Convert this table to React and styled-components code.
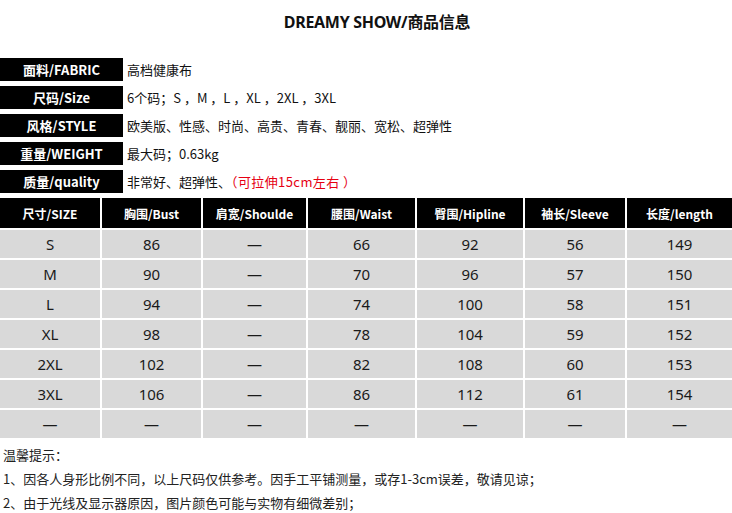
import React from "react";
import styled, { createGlobalStyle } from "styled-components";

const Global = createGlobalStyle`
  html, body { margin: 0; padding: 0; background: #fff; }
  body { font-family: "Noto Sans", "Noto Sans CJK SC", sans-serif; }
`;

const Page = styled.div`
  width: 732px;
  height: 513px;
  overflow: hidden;
  background: #fff;
`;

const Title = styled.h1`
  margin: 0;
  padding: 12px 0 0 22px;
  height: 46px;
  box-sizing: border-box;
  line-height: 20px;
  text-align: center;
  font-size: 16px;
  font-weight: 700;
  color: #111;
  font-family: "Noto Sans", "Noto Sans CJK SC", sans-serif;
  letter-spacing: -0.3px;
`;

const InfoList = styled.div`
  display: flex;
  flex-direction: column;
  gap: 5px;
  margin-top: 12px;
`;

const InfoRow = styled.div`
  display: flex;
  align-items: center;
  height: 23px;
`;

const Label = styled.div`
  width: 123px;
  height: 100%;
  background: #000;
  color: #fff;
  font-weight: 700;
  font-size: 13px;
  display: flex;
  align-items: center;
  justify-content: center;
  font-family: "Noto Sans CJK SC", sans-serif;
`;

const Value = styled.div`
  padding-left: 4px;
  font-size: 13px;
  color: #111;
  font-family: "Noto Sans CJK SC", sans-serif;
`;

const Red = styled.span`
  color: #e60012;
  letter-spacing: 0.4px;
`;

const Table = styled.div`
  margin-top: 5px;
  display: grid;
  grid-template-columns: 100px 99px 103px 107px 106px 100px 105px;
  grid-auto-rows: 28px;
  grid-template-rows: 30px;
  gap: 2px;
  background: #fff;
`;

const Head = styled.div`
  background: #000;
  color: #fff;
  font-weight: 700;
  font-size: 12px;
  display: flex;
  align-items: center;
  justify-content: center;
  font-family: "Noto Sans CJK SC", sans-serif;
  white-space: nowrap;
  overflow: hidden;
`;

const Cell = styled.div`
  background: #d9d9d9;
  color: #1a1a1a;
  font-size: 15px;
  display: flex;
  align-items: center;
  justify-content: center;
  font-family: "Noto Sans", "Noto Sans CJK SC", sans-serif;
`;

const Notes = styled.div`
  padding: 5px 0 0 3px;
  font-size: 13px;
  line-height: 24px;
  color: #222;
  font-family: "Noto Sans CJK SC", sans-serif;
`;

const info = [
  ["面料/FABRIC", "高档健康布"],
  ["尺码/Size", "6个码；S ，M ，L ，XL ，2XL ，3XL"],
  ["风格/STYLE", "欧美版、性感、时尚、高贵、青春、靓丽、宽松、超弹性"],
  ["重量/WEIGHT", "最大码；0.63kg"],
];

const heads = ["尺寸/SIZE", "胸围/Bust", "肩宽/Shoulde", "腰围/Waist", "臀围/Hipline", "袖长/Sleeve", "长度/length"];
const D = "—";
const rows = [
  ["S", "86", D, "66", "92", "56", "149"],
  ["M", "90", D, "70", "96", "57", "150"],
  ["L", "94", D, "74", "100", "58", "151"],
  ["XL", "98", D, "78", "104", "59", "152"],
  ["2XL", "102", D, "82", "108", "60", "153"],
  ["3XL", "106", D, "86", "112", "61", "154"],
  [D, D, D, D, D, D, D],
];

export default function App() {
  return (
    <Page>
      <Global />
      <Title>DREAMY SHOW/商品信息</Title>
      <InfoList>
        {info.map(([l, v]) => (
          <InfoRow key={l}>
            <Label>{l}</Label>
            <Value>{v}</Value>
          </InfoRow>
        ))}
        <InfoRow>
          <Label>质量/quality</Label>
          <Value>
            非常好、超弹性、<Red>（可拉伸15cm左右 ）</Red>
          </Value>
        </InfoRow>
      </InfoList>
      <Table>
        {heads.map((h) => (
          <Head key={h}>{h}</Head>
        ))}
        {rows.map((r, i) => r.map((c, j) => <Cell key={i + "-" + j}>{c}</Cell>))}
      </Table>
      <Notes>
        <div>温馨提示：</div>
        <div>1、因各人身形比例不同，以上尺码仅供参考。因手工平铺测量，或存1-3cm误差，敬请见谅；</div>
        <div>2、由于光线及显示器原因，图片颜色可能与实物有细微差别；</div>
      </Notes>
    </Page>
  );
}
